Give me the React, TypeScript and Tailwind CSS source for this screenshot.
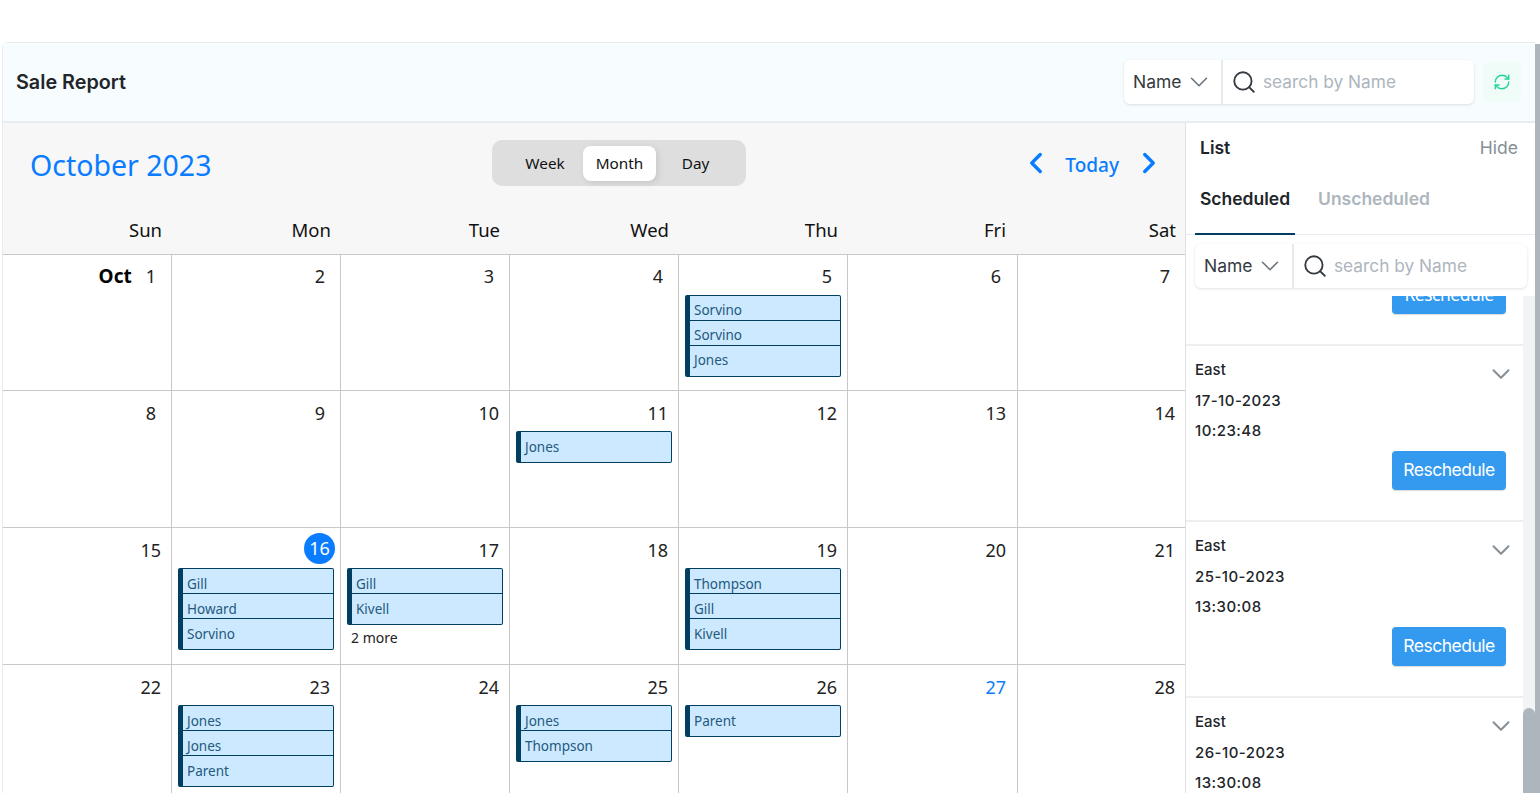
import { ChevronDown, ChevronLeft, ChevronRight, RefreshCw, Search } from "lucide-react";

const days = ["Sun", "Mon", "Tue", "Wed", "Thu", "Fri", "Sat"];

const cells: { day: number; events?: string[]; more?: string }[] = [
  { day: 1 },
  { day: 2 },
  { day: 3 },
  { day: 4 },
  { day: 5, events: ["Sorvino", "Sorvino", "Jones"] },
  { day: 6 },
  { day: 7 },
  { day: 8 },
  { day: 9 },
  { day: 10 },
  { day: 11, events: ["Jones"] },
  { day: 12 },
  { day: 13 },
  { day: 14 },
  { day: 15 },
  { day: 16, events: ["Gill", "Howard", "Sorvino"] },
  { day: 17, events: ["Gill", "Kivell"], more: "2 more" },
  { day: 18 },
  { day: 19, events: ["Thompson", "Gill", "Kivell"] },
  { day: 20 },
  { day: 21 },
  { day: 22 },
  { day: 23, events: ["Jones", "Jones", "Parent"] },
  { day: 24 },
  { day: 25, events: ["Jones", "Thompson"] },
  { day: 26, events: ["Parent"] },
  { day: 27 },
  { day: 28 },
];

const scheduled = [
  { date: "17-10-2023", time: "10:23:48" },
  { date: "25-10-2023", time: "13:30:08" },
  { date: "26-10-2023", time: "13:30:08" },
];

// single digits sit further in, and the Fri column is a pixel wider
function dayPadding(day: number) {
  if (day === 6) return "pr-[16px]";
  if (day < 10) return "pr-[15px]";
  if (day % 7 === 6) return "pr-[11px]";
  return "pr-[10px]";
}

function SearchBox({ width }: { width: string }) {
  return (
    <div className={`flex h-[44px] ${width} items-center rounded-md bg-white font-['Inter',sans-serif] text-[17.5px] shadow-[0_1px_3px_rgba(0,0,0,0.12)]`}>
      <div className="flex h-full w-[99px] shrink-0 items-center border-r-2 border-[#e5eaef] pl-[9px] text-[#343a40]">
        Name
        <ChevronDown className="ml-[2px] text-[#6c757d]" size={30} strokeWidth={1.3} />
      </div>
      <Search className="ml-[8px] text-[#343a40]" size={26} strokeWidth={1.7} />
      <span className="ml-[6px] text-[17.3px] text-[#adb5bd]">search by Name</span>
    </div>
  );
}

function ListItem({ date, time }: { date: string; time: string }) {
  return (
    <div className="h-[176px] shrink-0 border-b-2 border-[#eceef0] pl-[9px] pt-[16px] font-['Inter',sans-serif] text-[15px] font-medium text-[#212529]">
      <div className="flex h-[17px] items-center justify-between pr-[7px]">
        East
        <ChevronDown className="mt-[6px] text-[#868e96]" size={30} strokeWidth={1.6} />
      </div>
      <div className="mt-[13px] leading-[18px] tracking-[0.45px]">{date}</div>
      <div className="mt-[12px] leading-[18px] tracking-[0.45px]">{time}</div>
      <div className="mt-[11px] flex justify-end pr-[17px]">
        <RescheduleButton />
      </div>
    </div>
  );
}

function RescheduleButton() {
  return (
    <button className="h-[39px] w-[114px] rounded-[4px] bg-[#339af0] text-[17.5px] font-normal tracking-[-0.5px] text-white shadow-[0_1px_1px_rgba(0,0,0,0.15)]">
      Reschedule
    </button>
  );
}

export default function App() {
  return (
    <div className="flex h-[793px] w-[1540px] overflow-hidden bg-white pl-[2px] pt-[42px]">
      <div className="flex w-[1533px] shrink-0 flex-col rounded-tl-md border-l border-t border-[#e9ecef]">
        <header className="flex h-[80px] shrink-0 items-center justify-between border-b-2 border-[#e9ecef] bg-[#f7fcff] pl-[13px] pr-[14px]">
          <h1 className="mt-[2px] font-['Inter',sans-serif] text-[19.8px] font-semibold text-[#212529]">Sale Report</h1>
          <div className="flex items-center">
            <SearchBox width="w-[350px]" />
            <div className="ml-[9px] flex h-[40px] w-[38px] items-center justify-center rounded-md bg-[#f0fcf8]">
              <RefreshCw className="text-[#20d49c]" size={18} strokeWidth={1.8} />
            </div>
          </div>
        </header>

        <div className="flex min-h-0 flex-1">
          <section className="w-[1182px] shrink-0 font-['Noto_Sans',sans-serif]">
            <div className="bg-[#f7f7f7]">
              <div className="relative flex h-[87px] items-start justify-between pl-[27px] pr-[19px] pt-[22px]">
                <div className="text-[28.5px] leading-[40px] text-[#0a7cff]">October 2023</div>
                <div className="absolute left-[489px] top-[17px] flex h-[46px] w-[254px] items-center rounded-[10px] bg-[#dedede] pl-[15px] text-[15.3px] text-[#111]">
                  <span className="w-[76px] pt-[1px] text-center">Week</span>
                  <span className="flex h-[35px] w-[73px] items-center justify-center rounded-[8px] bg-white pt-[1px] shadow-[2px_2px_6px_rgba(0,0,0,0.1)]">Month</span>
                  <span className="w-[79px] pt-[1px] text-center">Day</span>
                </div>
                <div className="flex h-[36px] items-center text-[#0a7cff]">
                  <ChevronLeft size={34} strokeWidth={2.4} />
                  <span className="ml-[12px] mr-[13px] mt-[4px] text-[19px] font-medium">Today</span>
                  <ChevronRight size={34} strokeWidth={2.4} />
                </div>
              </div>
              <div className="grid h-[45px] grid-cols-[169px_169px_169px_169px_169px_169px_1fr] border-b border-[#c8c8c8] pt-[6px] text-[18.5px] text-[#111]">
                {days.map((d) => (
                  <div key={d} className="pr-[10px] text-right nth-[6]:pr-[11px] last:pr-[9px]">{d}</div>
                ))}
              </div>
            </div>
            <div className="grid grid-cols-[169px_169px_169px_169px_169px_170px_1fr] grid-rows-[136px_137px_137px_137px]">
              {cells.map((c) => (
                <div key={c.day} className="border-b border-r border-[#c8c8c8] nth-[7n]:border-r-0">
                  <div className={`flex h-[40px] items-start justify-end gap-[14px] text-[18px] leading-[27px] text-[#222] ${dayPadding(c.day)} ${c.day < 8 ? "pt-[8px]" : "pt-[9px]"}`}>
                    {c.day === 1 && <span className="text-[19px] font-bold text-black">Oct</span>}
                    {c.day === 16 ? (
                      <span className="-mr-[5px] -mt-[4px] flex h-[31px] w-[31px] items-center justify-center rounded-full bg-[#0a7cff] text-[#fff]">16</span>
                    ) : (
                      <span className={c.day === 27 ? "text-[#0a7cff]" : ""}>{c.day}</span>
                    )}
                  </div>
                  {c.events && (
                    <div className="ml-[6px] w-[156px] overflow-hidden rounded-[2px] border border-l-[5px] border-[#003f5f] bg-[#cce9ff] text-[13.5px] text-[#24597d]">
                      {c.events.map((e, i) => (
                        <div key={i} className={`h-[25px] border-b border-[#003f5f] pl-[4px] leading-[19px] last:h-[30px] last:border-b-0 ${c.day < 8 ? "pt-[5px]" : "pt-[6px]"}`}>
                          {e}
                        </div>
                      ))}
                    </div>
                  )}
                  {c.more && <div className="ml-[10px] mt-[2px] text-[14px] text-[#222]">{c.more}</div>}
                </div>
              ))}
            </div>
          </section>

          <aside className="flex min-w-0 flex-1 flex-col border-l border-[#dee2e6] bg-white">
            <div className="flex h-[50px] shrink-0 items-center justify-between pl-[14px] pr-[17px] font-['Inter',sans-serif] text-[17.5px]">
              <span className="font-semibold text-[#212529]">List</span>
              <span className="text-[#868e96]">Hide</span>
            </div>
            <div className="flex h-[62px] shrink-0 border-b border-[#e9ecef] pl-[9px] font-['Inter',sans-serif] text-[17.5px] font-semibold">
              <div className="h-[62px] w-[100px] border-b-2 border-[#003f5f] pt-[13px] text-center text-[#212529]">Scheduled</div>
              <div className="ml-[23px] pt-[13px] text-[#adb5bd]">Unscheduled</div>
            </div>
            <div className="relative z-10 ml-[9px] mt-[9px] shrink-0">
              <SearchBox width="w-[332px]" />
            </div>
            <div className="flex min-h-0 flex-1 overflow-hidden pt-[8px]">
              <div className="flex min-w-0 flex-1 flex-col">
                <div className="flex h-[50px] shrink-0 items-end justify-end overflow-hidden border-b-2 border-[#eceef0] pb-[30px] pr-[17px]">
                  <div className="shrink-0">
                    <RescheduleButton />
                  </div>
                </div>
                {scheduled.map((s) => (
                  <ListItem key={s.date} date={s.date} time={s.time} />
                ))}
              </div>
              <div className="flex w-[12px] shrink-0 flex-col justify-end bg-[#f1f3f5]">
                <div className="h-[85px] rounded-t-full bg-[#adb5bd]" />
              </div>
            </div>
          </aside>
        </div>
      </div>
      <div className="mt-[2px] w-[5px] shrink-0 bg-[#adb5bd]" />
    </div>
  );
}
